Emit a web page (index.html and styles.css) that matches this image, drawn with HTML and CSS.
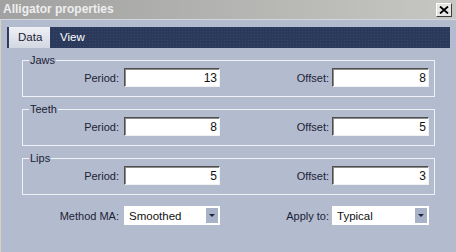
FILE: index.html
```html
<!DOCTYPE html>
<html>
<head>
    <meta charset="utf-8">
    <title>Alligator properties</title>
    <link rel="stylesheet" href="styles.css">
</head>
<body>
    <div class="window">
        <div class="titlebar">
            <span class="title">Alligator properties</span>
            <div class="close-btn">
                <svg width="10" height="8" viewBox="0 0 10 8">
                    <path d="M1 0.5 L9 7.5 M9 0.5 L1 7.5" stroke="#000" stroke-width="1.8" fill="none"/>
                </svg>
            </div>
        </div>
        <div class="content">
            <div class="tabs">
                <div class="tab active">Data</div>
                <div class="tab">View</div>
            </div>
            <div class="panel">
                <fieldset class="group">
                    <legend>Jaws</legend>
                    <div class="row">
                        <label>Period:</label>
                        <input class="input" type="text" value="13">
                        <label>Offset:</label>
                        <input class="input" type="text" value="8">
                    </div>
                </fieldset>
                <fieldset class="group">
                    <legend>Teeth</legend>
                    <div class="row">
                        <label>Period:</label>
                        <input class="input" type="text" value="8">
                        <label>Offset:</label>
                        <input class="input" type="text" value="5">
                    </div>
                </fieldset>
                <fieldset class="group">
                    <legend>Lips</legend>
                    <div class="row">
                        <label>Period:</label>
                        <input class="input" type="text" value="5">
                        <label>Offset:</label>
                        <input class="input" type="text" value="3">
                    </div>
                </fieldset>
                <div class="row bottom-row">
                    <label>Method MA:</label>
                    <div class="combo"><span>Smoothed</span><div class="combo-btn"></div></div>
                    <label>Apply to:</label>
                    <div class="combo"><span>Typical</span><div class="combo-btn"></div></div>
                </div>
            </div>
        </div>
    </div>
</body>
</html>
```

FILE: styles.css
```css
body {
    margin: 0;
    font-family: 'Liberation Sans', Arial, sans-serif;
    font-size: 11px;
    color: #1b2236;
    background: #b3bccf;
}

.window {
    width: 456px;
    height: 252px;
    display: flex;
    flex-direction: column;
    overflow: hidden;
}

.titlebar {
    height: 19px;
    flex: none;
    display: flex;
    justify-content: space-between;
    align-items: flex-start;
    padding: 0 4px 0 3px;
    background: linear-gradient(to right, #a1a1a1, #c6c6c2);
    border-bottom: 1px solid #d2d6de;
}

.title {
    font-size: 12px;
    font-weight: bold;
    line-height: 19px;
    color: #eeeeee;
}

.close-btn {
    width: 16px;
    height: 14px;
    margin-top: 3px;
    box-sizing: border-box;
    background: #e6e6e4;
    border: 1px solid;
    border-color: #ffffff #3c3c3c #3c3c3c #ffffff;
    display: flex;
    align-items: center;
    justify-content: center;
}

.content {
    flex: 1;
    border-left: 1px solid #d8d1bb;
    background: #b3bccf;
}

/* tab strip */
.tabs {
    height: 21px;
    margin: 7px 6px 0 6px;
    display: flex;
    background-color: #2b3a5b;
    background-image: radial-gradient(#34466b 0.6px, transparent 0.8px);
    background-size: 3px 3px;
}

.tab {
    font-size: 11.5px;
    line-height: 21px;
    color: #ffffff;
    padding: 0 10px;
}

.tab.active {
    width: 41px;
    box-sizing: border-box;
    margin-left: 2px;
    padding: 0 9px;
    color: #1b2236;
    background: linear-gradient(#eef0f4, #d2d8e2);
}

.panel {
    padding: 6px 21px 0 21px;
}

.group {
    margin: 0 0 6px 0;
    padding: 2px 5px 9px 6px;
    border: 1px solid #eef1f6;
    min-width: 0;
}

.group legend {
    padding: 0 1px;
    line-height: 12px;
}

.row {
    display: grid;
    grid-template-columns: 95px 96px 1fr 97px;
    align-items: center;
}

.row label {
    text-align: right;
    padding-right: 5px;
}

.row label:nth-of-type(2) {
    padding-right: 3px;
}

.input {
    width: 100%;
    height: 19px;
    box-sizing: border-box;
    margin: 0;
    padding: 0 2px 0 0;
    font-family: 'Liberation Sans', Arial, sans-serif;
    font-size: 12px;
    color: #111111;
    text-align: right;
    background: #ffffff;
    border: 1px solid;
    border-color: #4e4e4e #f2f2f2 #f2f2f2 #4e4e4e;
    box-shadow: inset 1px 1px 0 #8c8c8c;
    outline: none;
}

.bottom-row {
    margin: 11px 6px 0 7px;
}

.combo {
    height: 19px;
    box-sizing: border-box;
    padding: 2px 2px 2px 5px;
    background: #ffffff;
    display: flex;
    align-items: center;
    justify-content: space-between;
    font-size: 11.5px;
    color: #111111;
}

.combo-btn {
    width: 12px;
    height: 100%;
    background: #a9b3c7;
    display: flex;
    align-items: center;
    justify-content: center;
}

.combo-btn::after {
    content: "";
    border-left: 3px solid transparent;
    border-right: 3px solid transparent;
    border-top: 3px solid #1c2540;
}
```
